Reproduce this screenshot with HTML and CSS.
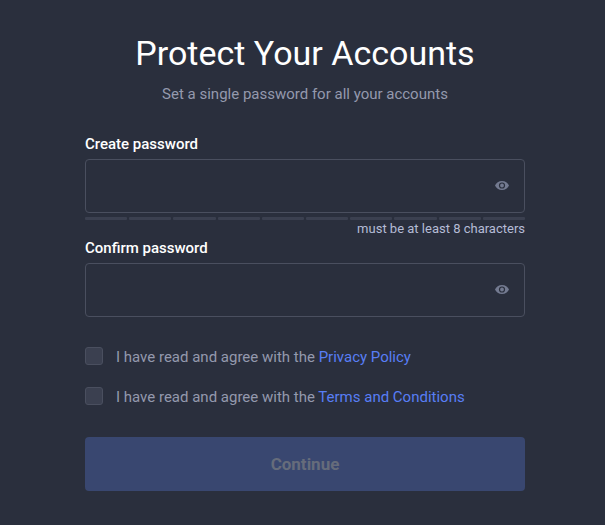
FILE: index.html
```
<!DOCTYPE html>
<html lang="en">
<head>
    <meta charset="UTF-8">
    <meta name="viewport" content="width=device-width, initial-scale=1.0">
    <title>Protect Your Accounts</title>
    <link rel="stylesheet" href="styles.css">
</head>
<body>
    <form class="password-form">
        <h1>Protect Your Accounts</h1>
        <p class="subtitle">Set a single password for all your accounts</p>

        <label class="field-label" for="password">Create password</label>
        <div class="field">
            <input type="password" id="password">
            <svg class="eye" viewBox="0 0 14 9"><path fill-rule="evenodd" d="M7 0C3.800 0 1.100 1.800 0 4.500c1.100 2.700 3.800 4.500 7 4.500s5.900-1.800 7-4.500C12.900 1.800 10.200 0 7 0zm0 7.600A3.100 3.100 0 1 1 7 1.400a3.100 3.100 0 0 1 0 6.200zM7 2.600a1.900 1.900 0 1 0 0 3.800 1.900 1.900 0 0 0 0-3.800z"/></svg>
        </div>
        <div class="strength">
            <span></span><span></span><span></span><span></span><span></span>
            <span></span><span></span><span></span><span></span><span></span>
        </div>
        <div class="hint">must be at least 8 characters</div>

        <label class="field-label" for="confirm">Confirm password</label>
        <div class="field">
            <input type="password" id="confirm">
            <svg class="eye" viewBox="0 0 14 9"><path fill-rule="evenodd" d="M7 0C3.800 0 1.100 1.800 0 4.500c1.100 2.700 3.800 4.500 7 4.500s5.900-1.800 7-4.500C12.900 1.800 10.200 0 7 0zm0 7.600A3.100 3.100 0 1 1 7 1.400a3.100 3.100 0 0 1 0 6.200zM7 2.600a1.900 1.900 0 1 0 0 3.800 1.900 1.900 0 0 0 0-3.800z"/></svg>
        </div>

        <div class="agreements">
            <label class="agree">
                <input type="checkbox">
                <span>I have read and agree with the <a href="#">Privacy Policy</a></span>
            </label>
            <label class="agree">
                <input type="checkbox">
                <span>I have read and agree with the <a href="#">Terms and Conditions</a></span>
            </label>
        </div>

        <button type="submit" disabled>Continue</button>
    </form>
</body>
</html>
```
FILE: styles.css
```
* {
    box-sizing: border-box;
}

body {
    margin: 0;
    background: #2a2f3d;
    color: #fff;
    font-family: Roboto, "Liberation Sans", sans-serif;
    font-size: 15px;
    overflow: hidden;
}

.password-form {
    width: 440px;
    margin: 0 0 0 85px;
    padding-top: 33px;
}

h1 {
    margin: 0;
    font-size: 34px;
    font-weight: 400;
    line-height: 40px;
    text-align: center;
}

.subtitle {
    margin: 11px 0 0;
    line-height: 20px;
    text-align: center;
    color: #9499ad;
}

.field-label {
    display: block;
    margin-top: 30px;
    margin-bottom: 5px;
    line-height: 20px;
    font-weight: 500;
}

.field {
    display: flex;
    align-items: center;
    height: 54px;
    padding: 0 15px;
    border: 1px solid #4a4f5f;
    border-radius: 4px;
}

.field input {
    flex: 1;
    height: 100%;
    padding: 0;
    border: none;
    outline: none;
    background: transparent;
    color: #fff;
    font: inherit;
}

.eye {
    width: 14px;
    height: 9px;
    margin-bottom: 1px;
    fill: #737a90;
}

.strength {
    display: flex;
    gap: 2px;
    margin-top: 4px;
}

.strength span {
    flex: 1;
    height: 3px;
    border-radius: 1px;
    background: #3b4050;
}

.hint {
    font-size: 13px;
    line-height: 18px;
    text-align: right;
    color: #b5bcd6;
}

.hint + .field-label {
    margin-top: 0;
}

.agreements {
    display: flex;
    flex-direction: column;
    gap: 20px;
    margin-top: 29px;
}

.agree {
    display: flex;
    align-items: center;
    height: 20px;
    color: #9499ad;
}

.agree input {
    appearance: none;
    width: 18px;
    height: 18px;
    margin: 0 13px 0 0;
    border: 1px solid #4a4f5f;
    border-radius: 3px;
    background: #3b4050;
}

.agree span {
    padding-top: 2px;
}

.agree a {
    color: #587ef5;
    text-decoration: none;
}

button {
    display: block;
    width: 100%;
    height: 54px;
    margin-top: 31px;
    border: none;
    border-radius: 4px;
    background: #394770;
    color: #666c7b;
    font-family: inherit;
    font-size: 17px;
    font-weight: 700;
}
```
